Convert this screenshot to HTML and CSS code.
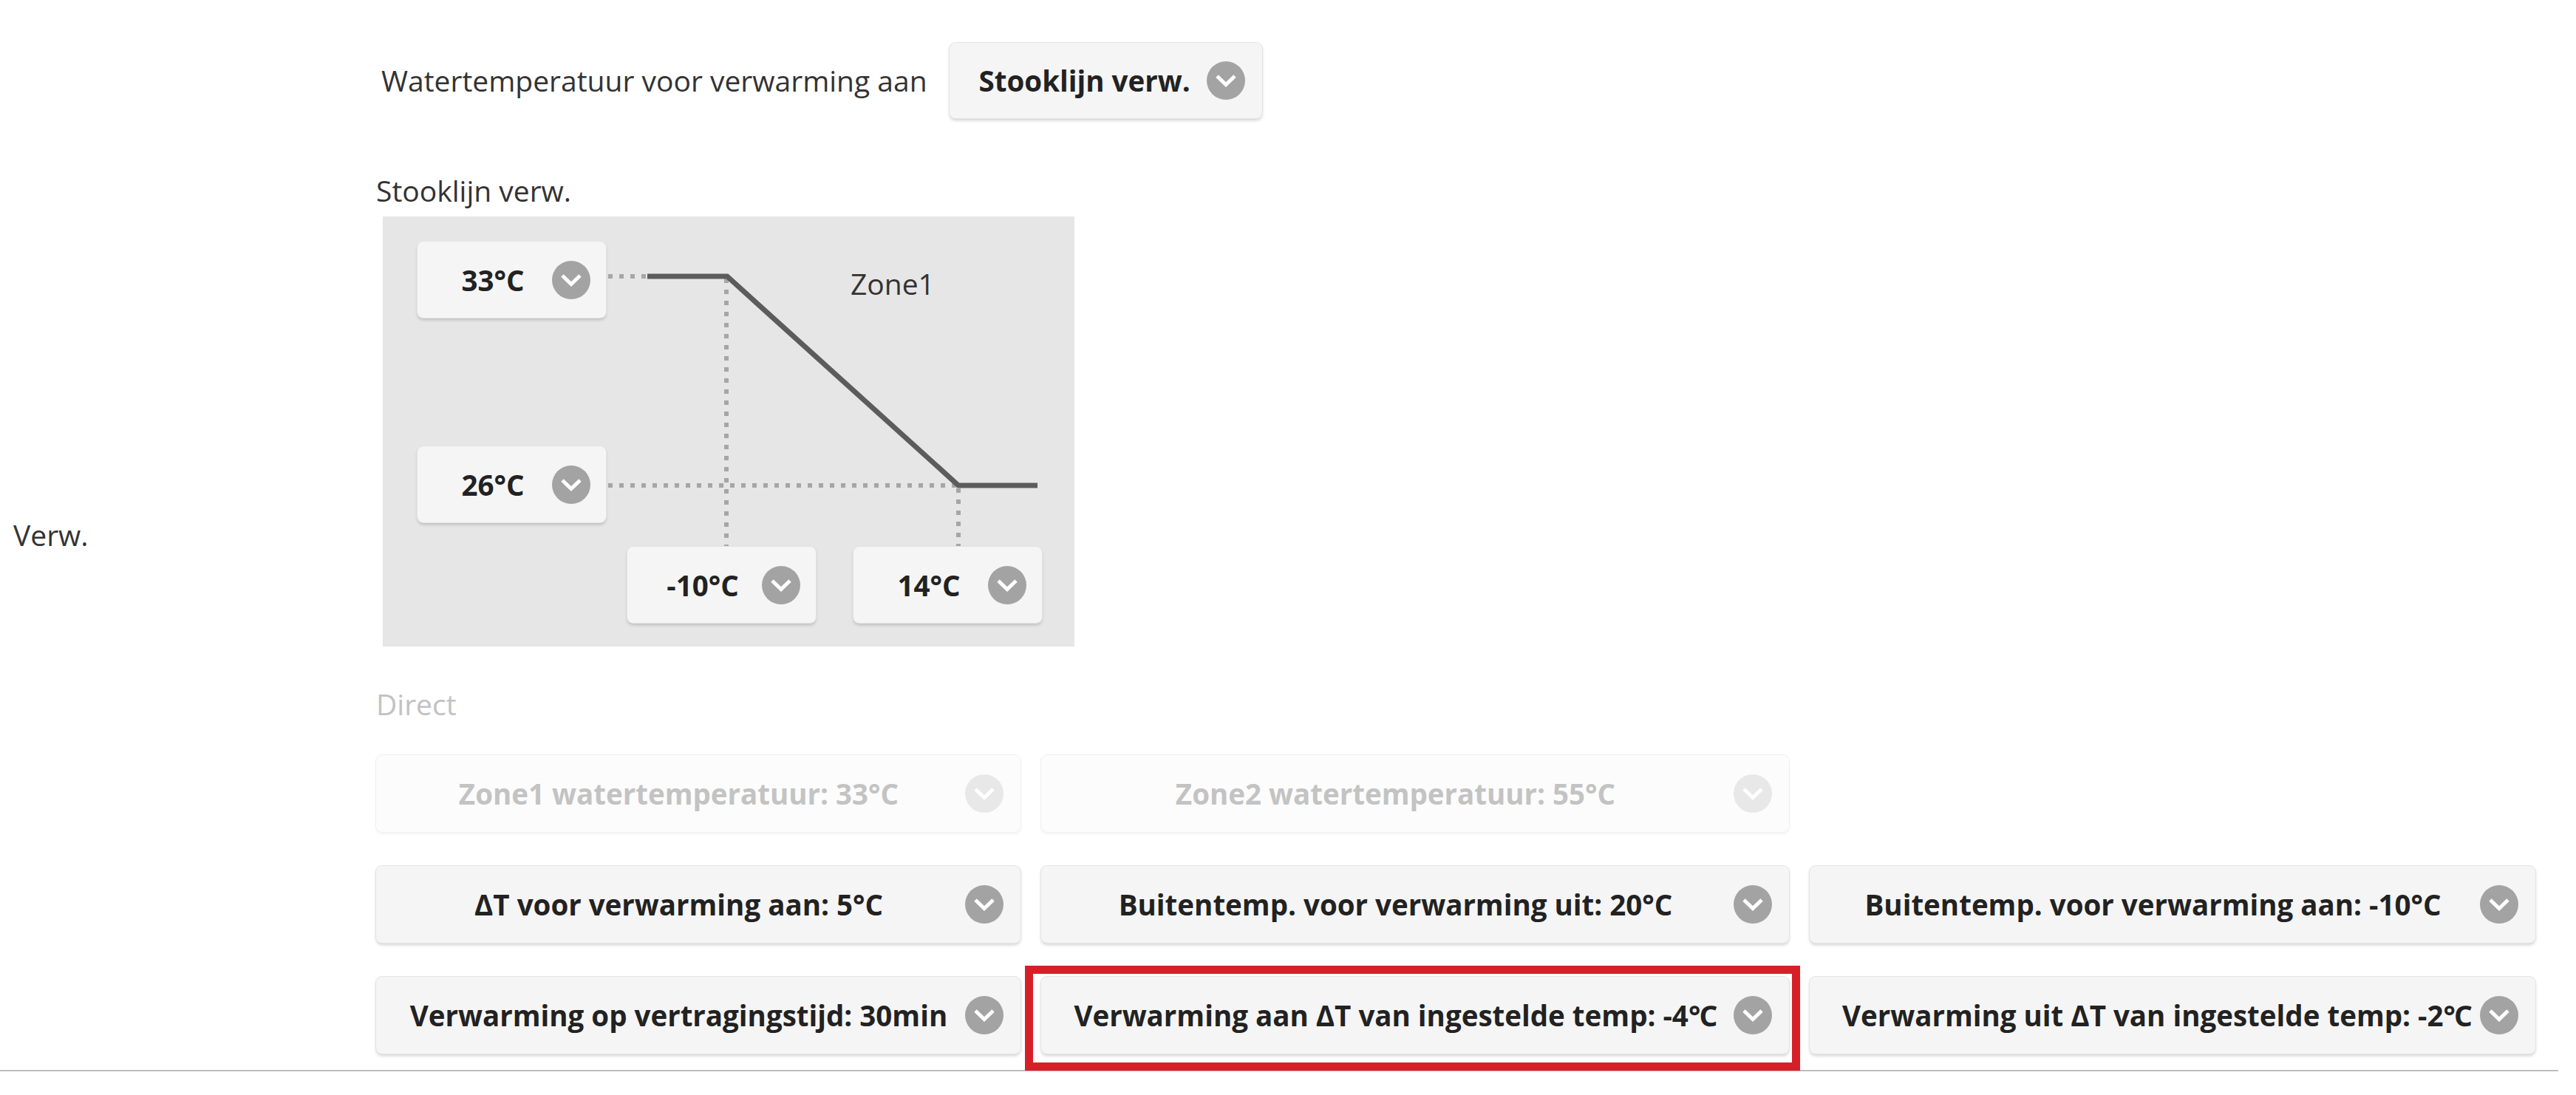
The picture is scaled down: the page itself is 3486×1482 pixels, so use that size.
FILE: index.html
```html
<!DOCTYPE html>
<html lang="nl">
<head>
  <meta charset="UTF-8" />
  <meta name="viewport" content="width=device-width, initial-scale=1.0"/>
  <title>Verwarming instellingen</title>
  <link rel="stylesheet" href="styles.css">
</head>
<body>

  <div class="setting-row">
    <div class="setting-name">Verw.</div>

    <div class="setting-body">
      <div class="field-line">
        <span class="field-label">Watertemperatuur voor verwarming aan</span>
        <div class="select select-inline">
          <span class="select-text">Stooklijn verw.</span>
          <svg class="chev" viewBox="0 0 52 52"><circle cx="26" cy="26" r="26"/><polyline points="14,20 26,31.5 38,20"/></svg>
        </div>
      </div>

      <div class="section-title">Stooklijn verw.</div>

      <div class="curve">
        <svg class="curve-lines" viewBox="0 0 936 582">
          <path class="dots" d="M305 81 H358 M465 84 V447 M305 364 H779 M779 368 V447"/>
          <polyline class="graph" points="358,81 466,81 779,364 886,364"/>
        </svg>
        <span class="curve-zone">Zone1</span>

        <div class="select curve-chip chip-max">
          <span class="select-text">33°C</span>
          <svg class="chev" viewBox="0 0 52 52"><circle cx="26" cy="26" r="26"/><polyline points="14,20 26,31.5 38,20"/></svg>
        </div>
        <div class="select curve-chip chip-min">
          <span class="select-text">26°C</span>
          <svg class="chev" viewBox="0 0 52 52"><circle cx="26" cy="26" r="26"/><polyline points="14,20 26,31.5 38,20"/></svg>
        </div>
        <div class="select curve-chip chip-low">
          <span class="select-text">-10°C</span>
          <svg class="chev" viewBox="0 0 52 52"><circle cx="26" cy="26" r="26"/><polyline points="14,20 26,31.5 38,20"/></svg>
        </div>
        <div class="select curve-chip chip-high">
          <span class="select-text">14°C</span>
          <svg class="chev" viewBox="0 0 52 52"><circle cx="26" cy="26" r="26"/><polyline points="14,20 26,31.5 38,20"/></svg>
        </div>
      </div>

      <div class="section-title disabled">Direct</div>

      <div class="select-grid">
        <div class="select disabled">
          <span class="select-text">Zone1 watertemperatuur: 33°C</span>
          <svg class="chev" viewBox="0 0 52 52"><circle cx="26" cy="26" r="26"/><polyline points="14,20 26,31.5 38,20"/></svg>
        </div>
        <div class="select disabled">
          <span class="select-text">Zone2 watertemperatuur: 55°C</span>
          <svg class="chev" viewBox="0 0 52 52"><circle cx="26" cy="26" r="26"/><polyline points="14,20 26,31.5 38,20"/></svg>
        </div>
        <div class="grid-empty"></div>

        <div class="select">
          <span class="select-text">ΔT voor verwarming aan: 5°C</span>
          <svg class="chev" viewBox="0 0 52 52"><circle cx="26" cy="26" r="26"/><polyline points="14,20 26,31.5 38,20"/></svg>
        </div>
        <div class="select">
          <span class="select-text">Buitentemp. voor verwarming uit: 20°C</span>
          <svg class="chev" viewBox="0 0 52 52"><circle cx="26" cy="26" r="26"/><polyline points="14,20 26,31.5 38,20"/></svg>
        </div>
        <div class="select">
          <span class="select-text">Buitentemp. voor verwarming aan: -10°C</span>
          <svg class="chev" viewBox="0 0 52 52"><circle cx="26" cy="26" r="26"/><polyline points="14,20 26,31.5 38,20"/></svg>
        </div>

        <div class="select">
          <span class="select-text">Verwarming op vertragingstijd: 30min</span>
          <svg class="chev" viewBox="0 0 52 52"><circle cx="26" cy="26" r="26"/><polyline points="14,20 26,31.5 38,20"/></svg>
        </div>
        <div class="select highlighted">
          <span class="select-text">Verwarming aan ΔT van ingestelde temp: -4℃</span>
          <svg class="chev" viewBox="0 0 52 52"><circle cx="26" cy="26" r="26"/><polyline points="14,20 26,31.5 38,20"/></svg>
        </div>
        <div class="select">
          <span class="select-text">Verwarming uit ΔT van ingestelde temp: -2℃</span>
          <svg class="chev" viewBox="0 0 52 52"><circle cx="26" cy="26" r="26"/><polyline points="14,20 26,31.5 38,20"/></svg>
        </div>
      </div>
    </div>
  </div>

</body>
</html>
```

FILE: styles.css
```css
:root {
  --text: #333333;
  --text-strong: #222222;
  --chip-bg: #f5f5f5;
  --chev: #a3a3a3;
  --muted: #c2c2c2;
  --curve-bg: #e6e6e6;
  --line: #bdbdbd;
  --mark: #d71f28;
}

body {
  margin: 0;
  font-family: 'Open Sans', 'Noto Sans', sans-serif;
  color: var(--text);
  background: #ffffff;
}

.setting-row {
  display: flex;
  align-items: center;
  margin-right: 24px;
  border-bottom: 2px solid var(--line);
}

.setting-name {
  width: 491px;
  padding-left: 18px;
  font-size: 39px;
  line-height: 52px;
}

.setting-body {
  flex: 1;
  padding: 58px 0 22px;
}

.field-line {
  display: flex;
  align-items: center;
  gap: 30px;
  margin-left: 7px;
}

.field-label,
.section-title {
  font-size: 39px;
  line-height: 52px;
}

.section-title {
  margin-top: 72px;
}

.section-title.disabled {
  margin-top: 52px;
  color: var(--muted);
}

/* dropdown knop */
.select {
  position: relative;
  display: flex;
  align-items: center;
  box-sizing: border-box;
  min-width: 0;
  height: 104px;
  padding: 0 23px 0 44px;
  background: var(--chip-bg);
  border-radius: 8px;
  box-shadow: 0 0 0 1px #e3e3e3, 0 3px 4px rgba(0, 0, 0, 0.18);
  font-size: 38.5px;
  font-weight: 700;
  color: var(--text-strong);
  white-space: nowrap;
}

.select-text {
  flex: 1;
  min-width: 0;
  text-align: center;
}

.chev {
  width: 52px;
  height: 52px;
  margin-left: 22px;
  flex-shrink: 0;
}

.chev circle {
  fill: var(--chev);
}

.chev polyline {
  fill: none;
  stroke: #ffffff;
  stroke-width: 5;
}

.select-inline {
  height: 102px;
  padding-left: 40px;
}

.select.disabled {
  background: #fcfcfc;
  color: #c3c3c3;
  box-shadow: 0 0 0 1px #f0f0f0, 0 3px 4px rgba(0, 0, 0, 0.05);
}

.select.disabled .chev circle {
  fill: #e8e8e8;
}

.select.highlighted::after {
  content: '';
  position: absolute;
  top: -15px;
  left: -22px;
  right: -15px;
  bottom: -23px;
  border: 11px solid var(--mark);
  pointer-events: none;
}

/* stooklijn grafiek */
.curve {
  position: relative;
  width: 936px;
  height: 582px;
  margin: 9px 0 0 9px;
  background: var(--curve-bg);
}

.curve-lines {
  position: absolute;
  top: 0;
  left: 0;
  width: 936px;
  height: 582px;
}

.curve-lines .dots {
  fill: none;
  stroke: #a6a6a6;
  stroke-width: 6;
  stroke-dasharray: 6 9;
}

.curve-lines .graph {
  fill: none;
  stroke: #5c5c5c;
  stroke-width: 7;
}

.curve-zone {
  position: absolute;
  left: 633px;
  top: 65px;
  font-size: 39px;
  line-height: 52px;
}

.curve-chip {
  position: absolute;
  width: 255px;
  height: 103px;
  padding-right: 21px;
}

.chip-max { left: 47px; top: 34px; }
.chip-min { left: 47px; top: 311px; }
.chip-low { left: 331px; top: 447px; }
.chip-high { left: 637px; top: 447px; }

.select-grid {
  display: grid;
  grid-template-columns: 872px 1012px 982px;
  column-gap: 28px;
  row-gap: 46px;
  margin-top: 43px;
}
```
